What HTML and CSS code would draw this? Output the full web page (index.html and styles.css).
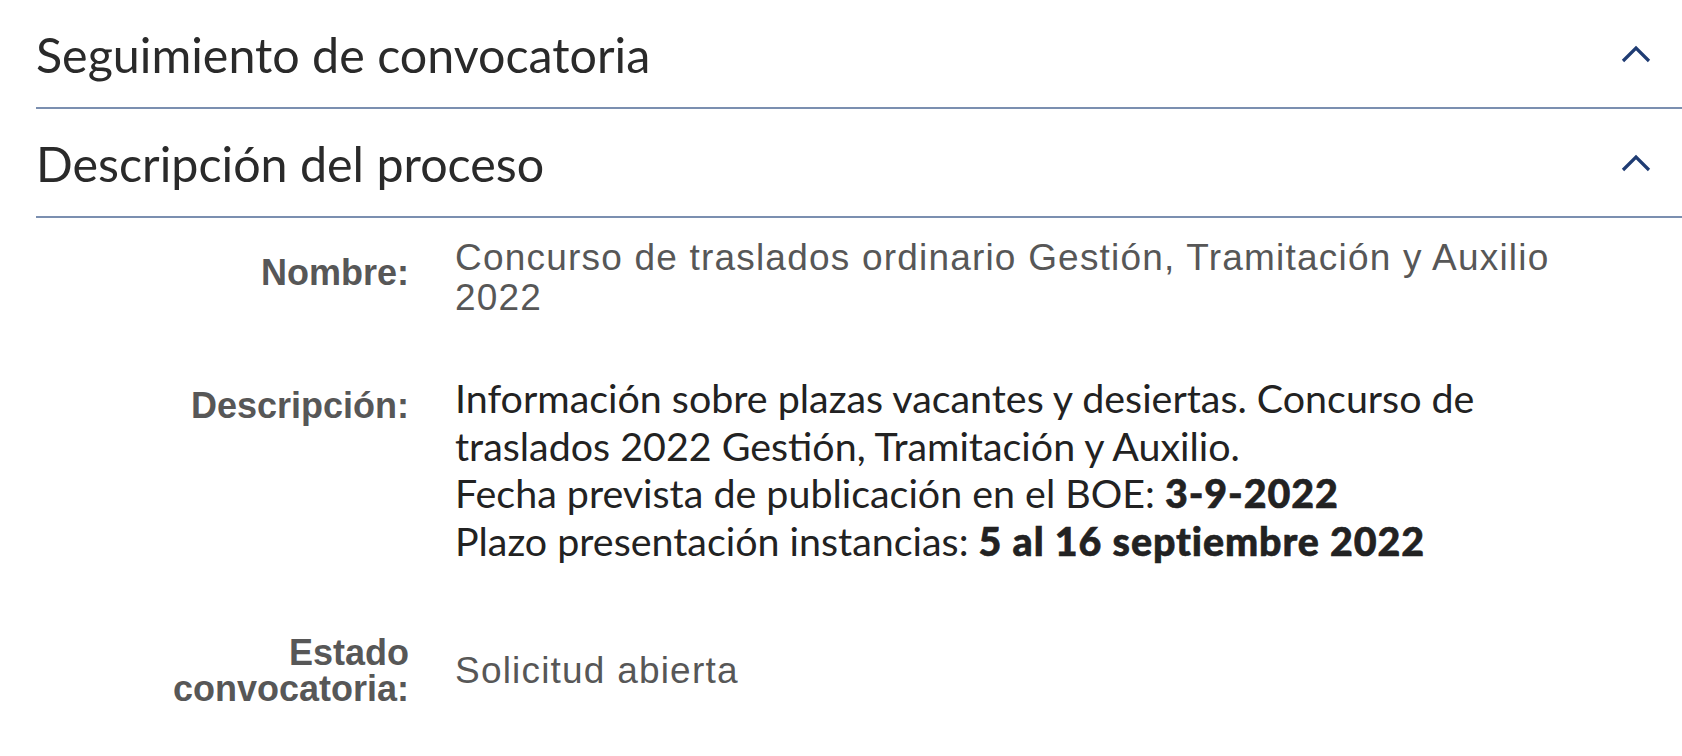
FILE: index.html
```html
<!DOCTYPE html>
<html lang="es">
<head>
    <meta charset="UTF-8">
    <meta name="viewport" content="width=device-width, initial-scale=1.0">
    <title>Convocatoria</title>
    <link rel="stylesheet" href="styles.css">
</head>
<body>

    <div class="accordion">
        <!-- Seguimiento -->
        <div class="panel-header">
            <h2>Seguimiento de convocatoria</h2>
            <svg class="chevron" width="30" height="19" viewBox="0 0 30 19">
                <polyline points="2,17 15,4 28,17" fill="none" stroke="#1f3c73" stroke-width="3.2"/>
            </svg>
        </div>

        <!-- Descripcion -->
        <div class="panel-header">
            <h2>Descripción del proceso</h2>
            <svg class="chevron" width="30" height="19" viewBox="0 0 30 19">
                <polyline points="2,17 15,4 28,17" fill="none" stroke="#1f3c73" stroke-width="3.2"/>
            </svg>
        </div>

        <div class="panel-body">
            <div class="row row-name">
                <div class="label">Nombre:</div>
                <div class="value">Concurso de traslados ordinario Gestión, Tramitación y Auxilio 2022</div>
            </div>

            <div class="row row-top">
                <div class="label">Descripción:</div>
                <div class="value description">
                    Información sobre plazas vacantes y desiertas. Concurso de traslados 2022 Gestión, Tramitación y Auxilio.<br>
                    Fecha prevista de publicación en el BOE: <strong>3-9-2022</strong><br>
                    Plazo presentación instancias: <strong>5 al 16 septiembre 2022</strong>
                </div>
            </div>

            <div class="row">
                <div class="label">Estado convocatoria:</div>
                <div class="value">Solicitud abierta</div>
            </div>
        </div>
    </div>

</body>
</html>
```

FILE: styles.css
```css
* {
    margin: 0;
    padding: 0;
    box-sizing: border-box;
}

body {
    font-family: "Liberation Sans", Arial, sans-serif;
    background-color: #fff;
    overflow: hidden;
}

.accordion {
    margin-left: 36px;
}

.panel-header {
    display: flex;
    justify-content: space-between;
    align-items: center;
    height: 109px;
    padding-right: 31px;
    border-bottom: 2px solid #7b8fb0;
}

.panel-header h2 {
    font-family: Lato, sans-serif;
    font-weight: 400;
    font-size: 48.4px;
    color: #2a2a2a;
}

.chevron {
    display: block;
}

.panel-body {
    padding-top: 20px;
    padding-left: 113px;
}

.row {
    display: flex;
    align-items: center;
    gap: 46px;
}

.row + .row {
    margin-top: 56px;
}

.row-top {
    align-items: flex-start;
}

.label {
    width: 260px;
    flex-shrink: 0;
    text-align: right;
    font-weight: 700;
    font-size: 36px;
    line-height: 35.5px;
    color: #575757;
}

.row-name .label {
    padding-bottom: 10px;
}

.row-top .label {
    padding-top: 14px;
}

.value {
    width: 1130px;
    font-size: 37px;
    letter-spacing: 1.2px;
    line-height: 40px;
    color: #575757;
}

.description {
    font-family: Lato, sans-serif;
    font-size: 39.4px;
    letter-spacing: 0;
    line-height: 47.5px;
    color: #222;
    padding-bottom: 15px;
}

.description strong {
    font-weight: 900;
    letter-spacing: 0.9px;
    -webkit-text-stroke: 0.6px #222;
}
```
